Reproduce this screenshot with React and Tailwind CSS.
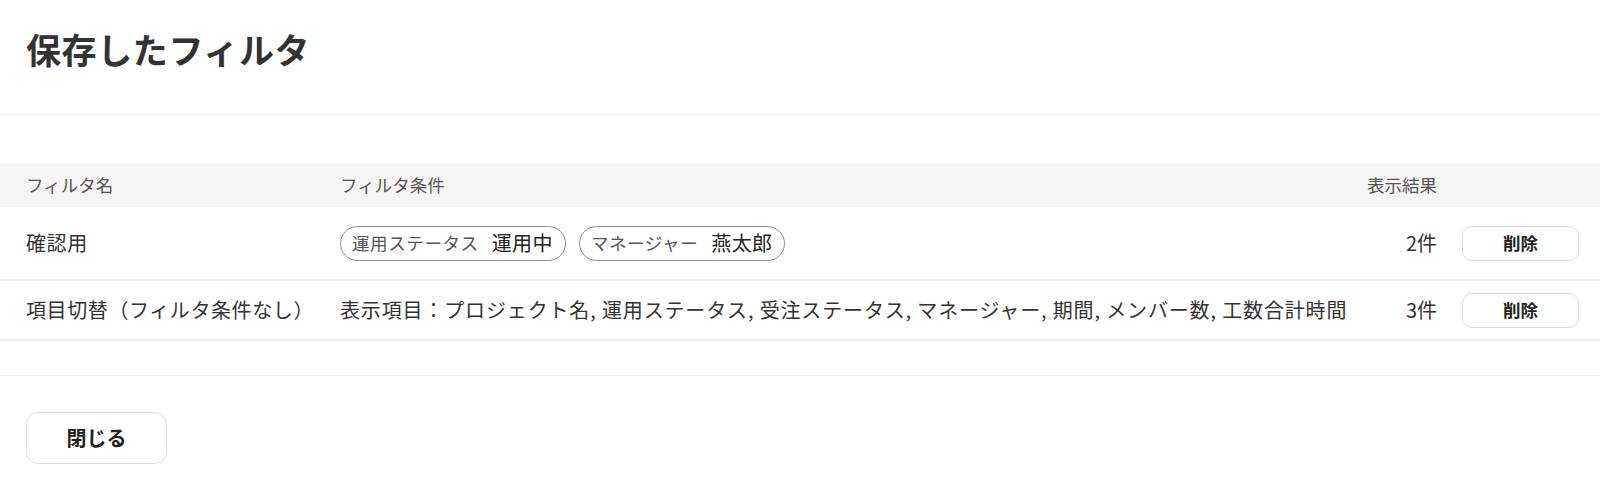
import React from 'react';

const font = { fontFamily: '"Noto Sans CJK JP", "Noto Sans", sans-serif' };

const Chip = ({ label, value }) => (
  <span className="inline-flex items-center h-[35px] rounded-full border border-[#8f8f8f] pl-[11px] pr-[12px] gap-[13px] whitespace-nowrap">
    <span className="text-[17.5px] tracking-[0.6px] text-[#555555]">{label}</span>
    <span className="text-[20px] tracking-[0.4px] text-[#222222]">{value}</span>
  </span>
);

const DeleteButton = () => (
  <button className="w-[117px] h-[35px] rounded-[10px] border border-[#dddddd] bg-white text-[17.5px] font-bold text-[#222222]">
    削除
  </button>
);

const filters = [
  {
    name: '確認用',
    chips: [
      { label: '運用ステータス', value: '運用中' },
      { label: 'マネージャー', value: '燕太郎' },
    ],
    count: '2件',
    height: 'h-[74px]',
  },
  {
    name: '項目切替（フィルタ条件なし）',
    text: '表示項目：プロジェクト名, 運用ステータス, 受注ステータス, マネージャー, 期間, メンバー数, 工数合計時間',
    count: '3件',
    height: 'h-[60px]',
  },
];

export default function App() {
  return (
    <div className="w-[1600px] h-[485px] bg-white text-[#333333]" style={font}>
      {/* Title */}
      <div className="h-[115px] border-b border-[#eeeeee] pl-[26px] pt-[27px]">
        <h1 className="text-[35px] leading-[44px] tracking-[0.6px] font-bold text-[#333333]">保存したフィルタ</h1>
      </div>

      {/* Table */}
      <div className="pt-[48px]">
        <div className="flex items-center h-[44px] bg-[#f6f4f4] pl-[26px] pr-[21px] text-[17.5px] text-[#555555]">
          <div className="w-[314px] shrink-0">フィルタ名</div>
          <div className="flex-1">フィルタ条件</div>
          <div className="w-[100px] text-right">表示結果</div>
          <div className="w-[117px] ml-[25px]" />
        </div>
        {filters.map((f) => (
          <div
            key={f.name}
            className={`flex items-center ${f.height} border-b-2 border-[#f0f0f0] pl-[26px] pr-[21px] text-[20px]`}
          >
            <div className="w-[314px] shrink-0 whitespace-nowrap tracking-[0.6px]">{f.name}</div>
            <div className="flex-1 flex items-center gap-[13px] whitespace-nowrap">
              {f.chips ? (
                f.chips.map((c) => <Chip key={c.label} label={c.label} value={c.value} />)
              ) : (
                <span className="tracking-[0.85px]">{f.text}</span>
              )}
            </div>
            <div className="w-[100px] text-right">{f.count}</div>
            <div className="w-[117px] ml-[25px]">
              <DeleteButton />
            </div>
          </div>
        ))}
      </div>

      {/* Footer */}
      <div className="mt-[34px] border-t border-[#eeeeee] pl-[26px] pt-[36px]">
        <button className="w-[141px] h-[52px] rounded-[12px] border border-[#dddddd] bg-white text-[20px] font-bold text-[#222222]">
          閉じる
        </button>
      </div>
    </div>
  );
}
